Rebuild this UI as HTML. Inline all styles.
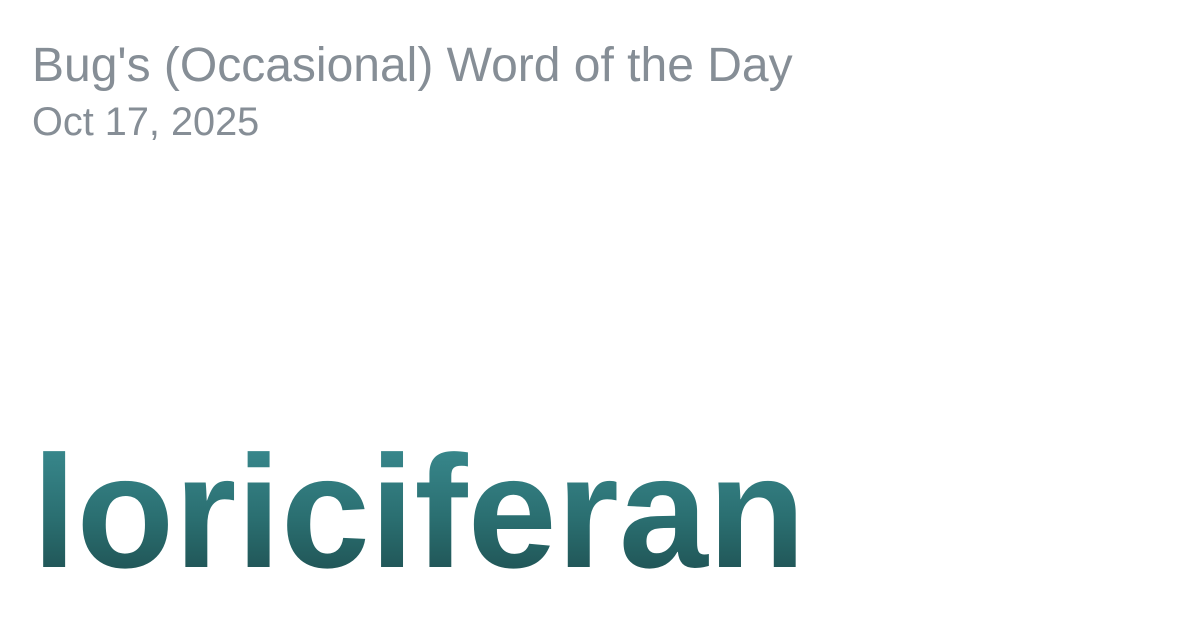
<!DOCTYPE html>
<html><head><meta charset="utf-8"><style>
html,body{margin:0;padding:0;width:1200px;height:630px;background:#fff;overflow:hidden;font-family:"Liberation Sans",sans-serif}
.t{position:absolute;left:32px;color:#868e96;line-height:1;white-space:nowrap}
#a{top:42px;font-size:48px}
#b{top:103px;font-size:39.7px}
#w{position:absolute;left:32px;top:432px;font-size:160px;line-height:160px;font-weight:bold;white-space:nowrap;
background:linear-gradient(180deg,#3b8d92 0%,#2a6e70 55%,#1d4c4d 100%);-webkit-background-clip:text;background-clip:text;color:transparent}
</style></head><body>
<div class="t" id="a">Bug's (Occasional) Word of the Day</div>
<div class="t" id="b">Oct 17, 2025</div>
<div id="w">loriciferan</div>
</body></html>
